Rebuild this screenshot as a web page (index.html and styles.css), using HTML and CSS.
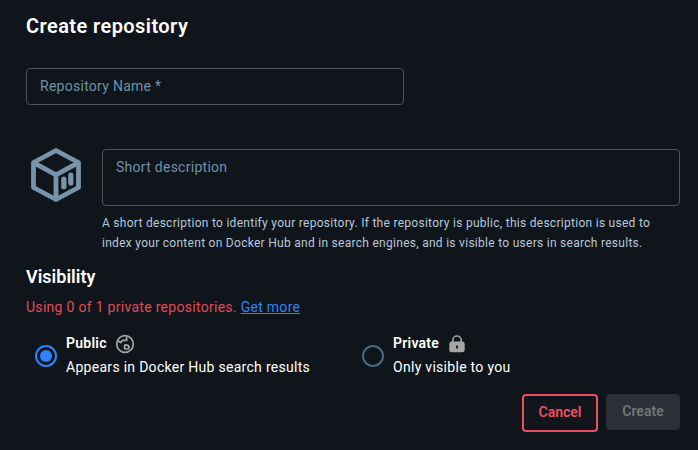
FILE: index.html
```html
<!DOCTYPE html>
<html lang="en">
<head>
<meta charset="utf-8">
<title>Create repository</title>
<link rel="stylesheet" href="styles.css">
</head>
<body>
<main class="page">
  <h1 class="title">Create repository</h1>
  <div class="field field-name"><span class="label">Repository Name *</span></div>
  <section class="description">
    <svg class="repo-icon" width="50" height="54" viewBox="0 0 50 54" fill="none" stroke="#7794ab" stroke-linejoin="round">
      <path d="M25 2.5 47.5 14.5V39.5L25 51.5 2.5 39.5V14.5ZM3 14.8 25 26.8 47 14.8M25 27V51" stroke-width="4.8"/>
      <path d="M32.8 31V38.7M39.8 27.2V35" stroke-width="5.2" stroke-linecap="round"/>
    </svg>
    <div class="description-body">
      <div class="field field-desc"><span class="label">Short description</span></div>
      <p class="help">A short description to identify your repository. If the repository is public, this description is used to<br>index your content on Docker Hub and in search engines, and is visible to users in search results.</p>
    </div>
  </section>
  <h2 class="subtitle">Visibility</h2>
  <p class="quota">Using 0 of 1 private repositories. <a class="link" href="#">Get more</a></p>
  <div class="options">
    <div class="option">
      <span class="radio checked"></span>
      <div>
        <div class="option-name"><span>Public</span>
          <svg class="globe" width="20" height="20" viewBox="0 0 20 20" fill="none" stroke="#a5a5a5" stroke-width="1.7" stroke-linejoin="round">
            <circle cx="10" cy="10" r="8.3"/>
            <path d="M2.2 6.6 5.6 8.6 7.6 6.4H11.6V2.4M10 10.8 13 11.3 14.2 13.2 13 15H10.2L9.4 13.5Z"/>
          </svg>
        </div>
        <div class="option-text">Appears in Docker Hub search results</div>
      </div>
    </div>
    <div class="option">
      <span class="radio"></span>
      <div>
        <div class="option-name"><span>Private</span>
          <svg class="lock" width="16" height="18" viewBox="0 0 16 18">
            <path d="M3.8 8V5.2a4.2 4.2 0 0 1 8.4 0V8" fill="none" stroke="#a5a5a5" stroke-width="1.6"/>
            <rect x=".3" y="6.5" width="15.4" height="10.8" rx="2.4" fill="#a5a5a5"/>
            <rect x="7.1" y="10.4" width="1.9" height="3" rx=".5" fill="#10151b"/>
          </svg>
        </div>
        <div class="option-text">Only visible to you</div>
      </div>
    </div>
  </div>
  <div class="actions">
    <button class="button cancel">Cancel</button>
    <button class="button create" disabled>Create</button>
  </div>
</main>
</body>
</html>
```
FILE: styles.css
```css
* { box-sizing: border-box; }
body {
  margin: 0;
  background: #10151b;
  color: #fff;
  font: 14px/24px Roboto, sans-serif;
}
h1, h2, p { margin: 0; }
.page {
  width: 698px;
  height: 450px;
  padding: 12px 18px 0 26px;
  overflow: hidden;
}
.title { font-size: 20px; line-height: 28px; font-weight: 600; letter-spacing: .43px; }
.field {
  border: 1px solid #505355;
  border-radius: 4px;
  padding: 0 13px;
  color: #6f91ad;
  letter-spacing: .27px;
}
.field-name { width: 378px; height: 37px; margin-top: 28px; line-height: 35px; }
.description { display: flex; margin-top: 44px; }
.repo-icon { flex: none; margin: -1px 21px 0 5px; }
.description-body { flex: 1; }
.field-desc { height: 57px; line-height: 35px; }
.help { margin-top: 7px; font-size: 12px; line-height: 20px; color: #b7c8da; letter-spacing: .28px; white-space: nowrap; }
.subtitle { margin-top: 12px; font-size: 18px; line-height: 24px; font-weight: 600; }
.quota { margin-top: 6px; color: #e14a58; letter-spacing: .29px; }
.link { color: #2b83fa; text-decoration: underline; }
.options { display: grid; grid-template-columns: 327px 1fr; margin-top: 12px; }
.option { display: flex; padding-left: 9px; }
.radio { display: flex; flex: none; align-items: center; justify-content: center; width: 22px; height: 22px; margin: 14px 9px 0 0; border: 2px solid #4b6981; border-radius: 50%; }
.checked { border-color: #2d83ff; }
.checked::after { content: ""; width: 12px; height: 12px; border-radius: 50%; background: #2d83ff; }
.option-name { display: flex; height: 24px; font-weight: 600; letter-spacing: .25px; }
.option-text { letter-spacing: .29px; }
.globe { margin: 3px 0 0 8px; }
.lock { margin: 4px 0 0 10px; }
.actions { display: flex; justify-content: flex-end; gap: 8px; margin-top: 15px; }
.button { font: 600 14px/20px Roboto, sans-serif; border-radius: 4px; padding: 0; }
.cancel { width: 76px; height: 38px; padding-bottom: 2px; border: 2px solid #ee4f60; background: transparent; color: #ee4f60; }
.create { width: 74px; height: 36px; padding-bottom: 2px; border: 0; background: #2c3036; color: #72767a; }
```
